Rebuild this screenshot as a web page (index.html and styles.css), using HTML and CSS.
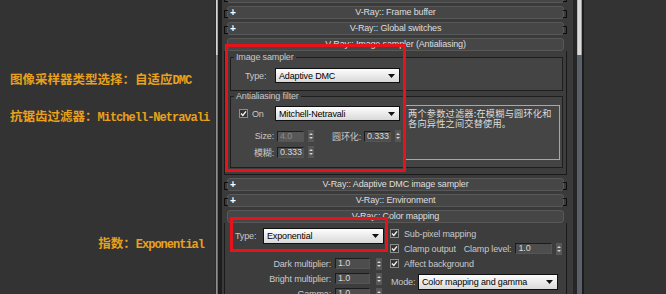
FILE: index.html
```html
<!DOCTYPE html>
<html lang="zh-CN">
<head>
    <meta charset="UTF-8">
    <title>V-Ray Renderer Settings</title>
    <link rel="stylesheet" href="styles.css">
</head>
<body>
<div class="screen">
    <!-- annotations on the left -->
    <div class="notes">
        <p class="note note-1">图像采样器类型选择：自适应<span class="mono">DMC</span></p>
        <p class="note note-2">抗锯齿过滤器：<span class="mono">Mitchell-Netravali</span></p>
        <p class="note note-3">指数：<span class="mono">Exponential</span></p>
    </div>

    <div class="rail rail-left"><div class="thumb"></div></div>

    <div class="panel">
        <div class="roll closed">
            <div class="roll-head"><span></span><span class="title"></span><span></span></div>
        </div>
        <div class="roll closed">
            <div class="roll-head"><span class="plus">+</span><span class="title">V-Ray:: Frame buffer</span><span></span></div>
        </div>
        <div class="roll closed">
            <div class="roll-head"><span class="plus">+</span><span class="title">V-Ray:: Global switches</span><span></span></div>
        </div>

        <!-- Image sampler (open) -->
        <div class="roll">
            <div class="roll-head"><span></span><span class="title">V-Ray:: Image sampler (Antialiasing)</span><span></span></div>
            <div class="roll-body sampler-body">
                <fieldset class="group group-sampler">
                    <legend>Image sampler</legend>
                    <div class="type-row">
                        <span class="type-lbl">Type:</span>
                        <div class="drop drop-sampler"><span>Adaptive DMC</span><svg width="7" height="4" viewBox="0 0 7 4"><path d="M0 0h7L3.5 4z" fill="#111"/></svg></div>
                    </div>
                </fieldset>

                <fieldset class="group group-filter">
                    <legend>Antialiasing filter</legend>
                    <div class="filter">
                        <div class="filter-left">
                            <div class="frow frow-on">
                                <div class="on-cell">
                                    <svg class="chk" width="9" height="9" viewBox="0 0 9 9"><rect x="0.5" y="0.5" width="8" height="8" fill="#343434" stroke="#8c8c8c"/><path d="M2 4.6 3.8 6.5 7 2.4" fill="none" stroke="#f2f2f2" stroke-width="1.4"/></svg>
                                    <span>On</span>
                                </div>
                                <div class="drop drop-filter"><span>Mitchell-Netravali</span><svg width="7" height="4" viewBox="0 0 7 4"><path d="M0 0h7L3.5 4z" fill="#111"/></svg></div>
                            </div>
                            <div class="frow frow-size">
                                <span class="flbl">Size:</span>
                                <span class="num num-off">4.0</span>
                                <svg class="spin" width="6" height="12" viewBox="0 0 6 12"><rect width="6" height="12" fill="#575757"/><path d="M1 5 3 3 5 5z M1 7 3 9 5 7z" fill="#d2d2d2"/></svg>
                                <span class="flbl flbl-ring">圆环化:</span>
                                <span class="num">0.333</span>
                                <svg class="spin" width="6" height="12" viewBox="0 0 6 12"><rect width="6" height="12" fill="#575757"/><path d="M1 5 3 3 5 5z M1 7 3 9 5 7z" fill="#d2d2d2"/></svg>
                            </div>
                            <div class="frow frow-blur">
                                <span class="flbl">模糊:</span>
                                <span class="num">0.333</span>
                                <svg class="spin" width="6" height="12" viewBox="0 0 6 12"><rect width="6" height="12" fill="#575757"/><path d="M1 5 3 3 5 5z M1 7 3 9 5 7z" fill="#d2d2d2"/></svg>
                            </div>
                        </div>
                        <div class="desc"><div>两个参数过滤器:在模糊与圆环化和</div><div>各向异性之间交替使用。</div></div>
                    </div>
                </fieldset>
            </div>
        </div>

        <div class="roll closed">
            <div class="roll-head"><span class="plus">+</span><span class="title">V-Ray:: Adaptive DMC image sampler</span><span></span></div>
        </div>
        <div class="roll closed">
            <div class="roll-head"><span class="plus">+</span><span class="title">V-Ray:: Environment</span><span></span></div>
        </div>

        <!-- Color mapping (open) -->
        <div class="roll">
            <div class="roll-head"><span></span><span class="title">V-Ray:: Color mapping</span><span></span></div>
            <div class="roll-body map-body">
                <div class="map-left">
                    <div class="map-type">
                        <span class="map-type-lbl">Type:</span>
                        <div class="drop drop-type"><span>Exponential</span><svg width="7" height="4" viewBox="0 0 7 4"><path d="M0 0h7L3.5 4z" fill="#111"/></svg></div>
                    </div>
                    <div class="mrow mrow-first">
                        <span class="mlbl">Dark multiplier:</span>
                        <span class="num num-wide">1.0</span>
                        <svg class="spin" width="6" height="12" viewBox="0 0 6 12"><rect width="6" height="12" fill="#575757"/><path d="M1 5 3 3 5 5z M1 7 3 9 5 7z" fill="#d2d2d2"/></svg>
                    </div>
                    <div class="mrow">
                        <span class="mlbl">Bright multiplier:</span>
                        <span class="num num-wide">1.0</span>
                        <svg class="spin" width="6" height="12" viewBox="0 0 6 12"><rect width="6" height="12" fill="#575757"/><path d="M1 5 3 3 5 5z M1 7 3 9 5 7z" fill="#d2d2d2"/></svg>
                    </div>
                    <div class="mrow">
                        <span class="mlbl">Gamma:</span>
                        <span class="num num-wide">1.0</span>
                        <svg class="spin" width="6" height="12" viewBox="0 0 6 12"><rect width="6" height="12" fill="#575757"/><path d="M1 5 3 3 5 5z M1 7 3 9 5 7z" fill="#d2d2d2"/></svg>
                    </div>
                </div>
                <div class="map-right">
                    <div class="crow">
                        <svg class="chk" width="9" height="9" viewBox="0 0 9 9"><rect x="0.5" y="0.5" width="8" height="8" fill="#343434" stroke="#8c8c8c"/><path d="M2 4.6 3.8 6.5 7 2.4" fill="none" stroke="#f2f2f2" stroke-width="1.4"/></svg>
                        <span>Sub-pixel mapping</span>
                    </div>
                    <div class="crow">
                        <svg class="chk" width="9" height="9" viewBox="0 0 9 9"><rect x="0.5" y="0.5" width="8" height="8" fill="#343434" stroke="#8c8c8c"/><path d="M2 4.6 3.8 6.5 7 2.4" fill="none" stroke="#f2f2f2" stroke-width="1.4"/></svg>
                        <span>Clamp output</span>
                        <span class="clamp-lbl">Clamp level:</span>
                        <span class="num num-clamp">1.0</span>
                        <svg class="spin spin-clamp" width="6" height="12" viewBox="0 0 6 12"><rect width="6" height="12" fill="#575757"/><path d="M1 5 3 3 5 5z M1 7 3 9 5 7z" fill="#d2d2d2"/></svg>
                    </div>
                    <div class="crow">
                        <svg class="chk" width="9" height="9" viewBox="0 0 9 9"><rect x="0.5" y="0.5" width="8" height="8" fill="#343434" stroke="#8c8c8c"/><path d="M2 4.6 3.8 6.5 7 2.4" fill="none" stroke="#f2f2f2" stroke-width="1.4"/></svg>
                        <span>Affect background</span>
                    </div>
                    <div class="mode-row">
                        <span class="mode-lbl">Mode:</span>
                        <div class="drop drop-mode"><span>Color mapping and gamma</span><svg width="7" height="4" viewBox="0 0 7 4"><path d="M0 0h7L3.5 4z" fill="#111"/></svg></div>
                    </div>
                </div>
            </div>
        </div>

        <!-- red highlight frames -->
        <div class="mark mark-sampler"></div>
        <div class="mark mark-type"></div>
    </div>

    <div class="rail rail-right"><div class="thumb"></div></div>

    <div class="blank"></div>
</div>
</body>
</html>
```

FILE: styles.css
```css
* {
    box-sizing: border-box;
}

body {
    margin: 0;
    background: #333;
    font-family: "Liberation Sans", "Noto Sans CJK SC", sans-serif;
}

.screen {
    display: flex;
    width: 666px;
    height: 294px;
    overflow: hidden;
}

/* Left annotations */
.notes {
    width: 215px;
    flex: none;
    padding-top: 71px;
    color: #e9a11b;
    font-family: "Noto Sans CJK SC", sans-serif;
    font-size: 12.5px;
    font-weight: bold;
}

.note {
    margin: 0;
    line-height: 16px;
    padding-left: 10px;
    white-space: nowrap;
}

.note .mono {
    font-family: "Liberation Mono", monospace;
    font-size: 12px;
    letter-spacing: -1px;
}

.note-2 { margin-top: 19px; }
.note-3 { margin-top: 109px; text-align: right; padding-right: 11px; }

/* Scroll rails */
.rail {
    flex: none;
    height: 100%;
}

.rail .thumb {
    height: 55px;
}

.rail-left {
    width: 7px;
    background: linear-gradient(to right, #2c2c2c 0 1px, #8e8e8e 1px 2px, #6a6a6a 2px 3px, #1e1e1e 3px 7px);
}

.rail-left .thumb {
    background: linear-gradient(to right, #2c2c2c 0 1px, #d6d6d6 1px 2px, #a8a8a8 2px 3px, #1e1e1e 3px 7px);
}

.rail-right {
    width: 11px;
    background: linear-gradient(to right, #262626 0 4px, #59606a 4px 9px, #1c1c1c 9px 11px);
}

.rail-right .thumb {
    background: linear-gradient(to right, #262626 0 4px, #b9b9b9 4px 5px, #dadada 5px 8px, #9c9c9c 8px 9px, #1c1c1c 9px 11px);
}

.blank {
    flex: 1;
    background: #333;
}

/* Rollout panel */
.panel {
    width: 351px;
    flex: none;
    position: relative;
    background: #3a3a3a;
    font-size: 9px;
    color: #c8c8c8;
    letter-spacing: -0.15px;
}

.roll {
    position: relative;
    margin: 0 6px 3px 2px;
}

.roll:first-child {
    margin-top: -10px;
}

.roll-head {
    display: grid;
    grid-template-columns: 14px 1fr 14px;
    height: 13px;
    margin: 0 3px;
    border: 1px solid #585858;
    border-radius: 3px;
    background: #464646;
    color: #dedede;
    line-height: 11px;
}

.roll-head .plus {
    padding-left: 2px;
    color: #fff;
    font-weight: bold;
    font-size: 10px;
}

.roll-head .title {
    text-align: center;
    white-space: nowrap;
}

.closed::before,
.closed::after {
    content: "";
    position: absolute;
    top: 4px;
    width: 3px;
    height: 6px;
    border: 1px solid #0e0e0e;
}

.closed::before { left: 0; border-right: none; }
.closed::after { right: 0; border-left: none; }

.roll-body {
    background: #3d3d3d;
    border: 1px solid #1a1a1a;
    border-top: none;
}

/* Image sampler */
.sampler-body {
    height: 124px;
    padding-top: 1px;
}

.group {
    margin: 0 3px 0 5px;
    padding: 0;
    border: 1px solid #1e1e1e;
    background: #444;
    min-width: 0;
}

.group legend {
    margin-left: 3px;
    padding: 0 2px;
    line-height: 10px;
    font-size: 9px;
    color: #c8c8c8;
}

.group-sampler {
    padding: 6px 0 7px;
}

.group-filter {
    padding: 4px 0 7px;
}

.type-row {
    display: flex;
    align-items: center;
    padding-left: 14px;
}

.type-lbl { width: 30px; }

.drop {
    display: flex;
    align-items: center;
    justify-content: space-between;
    height: 15px;
    padding: 0 4px 0 3px;
    border: 1px solid #101010;
    background: linear-gradient(#fdfdfd, #d9d9d9);
    color: #000;
    font-size: 9px;
    white-space: nowrap;
}

.drop-sampler,
.drop-filter { width: 125px; }

.filter {
    display: grid;
    grid-template-columns: 172px 155px;
    column-gap: 2px;
}

.frow {
    display: flex;
    align-items: center;
    height: 12px;
}

.frow-on {
    height: 15px;
    margin-top: 1px;
}

.frow-size { margin-top: 9px; }
.frow-blur { margin-top: 4px; }

.on-cell {
    display: flex;
    align-items: center;
    gap: 4px;
    width: 44px;
    padding-left: 8px;
}

.chk {
    flex: none;
    display: block;
}

.flbl {
    width: 43px;
    margin-right: 3px;
    text-align: right;
    white-space: nowrap;
}

.flbl-ring {
    width: 47px;
}

.num {
    display: block;
    width: 27px;
    height: 11px;
    padding-left: 2px;
    border: 1px solid #555;
    border-top-color: #1c1c1c;
    border-left-color: #1c1c1c;
    background: #4d4d4d;
    color: #d8d8d8;
    font-size: 9px;
    line-height: 9px;
}

.num-off {
    background: #575757;
    color: #8c8c8c;
}

.spin {
    flex: none;
    display: block;
    margin-left: 4px;
}

.desc {
    height: 55px;
    padding: 2px;
    border: 1px solid #a8a8a8;
    background: #454545;
    color: #dcdcdc;
    font-family: "Noto Sans CJK SC", sans-serif;
    font-size: 9.2px;
    line-height: 10px;
    letter-spacing: 0.2px;
    white-space: nowrap;
}

.desc div {
    height: 10px;
}

/* Color mapping */
.map-body {
    display: grid;
    grid-template-columns: 163px 1fr;
    height: 80px;
}

.map-left {
    padding-top: 5px;
}

.map-type {
    display: flex;
    align-items: center;
    height: 16px;
    padding-left: 10px;
}

.map-type-lbl { width: 28px; }

.drop-type {
    width: 121px;
    height: 16px;
}

.mrow {
    display: flex;
    align-items: center;
    height: 15px;
}

.mrow-first { margin-top: 12px; }

.mlbl {
    width: 106px;
    margin-right: 4px;
    text-align: right;
    white-space: nowrap;
}

.num-wide { width: 35px; }

.mrow .spin { margin-left: 6px; }

.map-right {
    padding-top: 3px;
}

.crow {
    display: flex;
    align-items: center;
    height: 15px;
    padding-left: 2px;
    white-space: nowrap;
}

.crow .chk { margin-right: 5px; }

.clamp-lbl { margin-left: 8px; }

.num-clamp {
    width: 37px;
    margin-left: 4px;
}

.mode-row {
    display: flex;
    align-items: center;
    height: 16px;
    margin-top: 3px;
    padding-left: 3px;
}

.mode-lbl { width: 27px; }

.drop-mode {
    width: 140px;
    height: 16px;
}

/* Red highlight frames drawn over the panel */
.mark {
    position: absolute;
    border: 3px solid #e8131a;
}

.mark-sampler {
    left: 3px;
    top: 44px;
    width: 181px;
    height: 128px;
}

.mark-type {
    left: 8px;
    top: 217px;
    width: 158px;
    height: 35px;
}
```
